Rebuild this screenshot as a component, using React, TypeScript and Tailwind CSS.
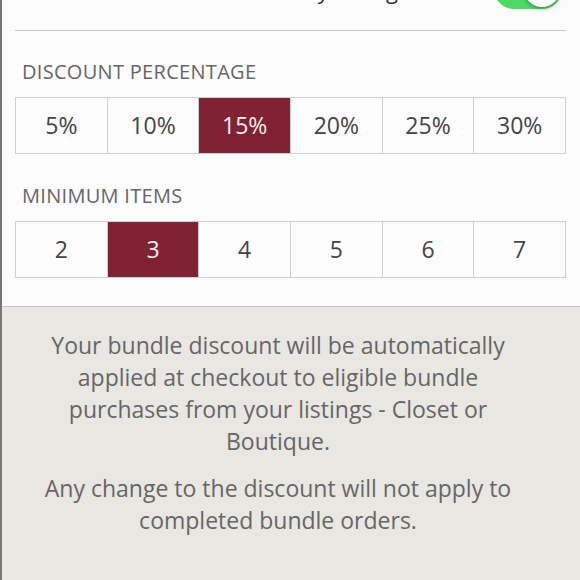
import React from "react";

const percents = ["5%", "10%", "15%", "20%", "25%", "30%"];
const items = ["2", "3", "4", "5", "6", "7"];

function Segmented({ values, selected }: { values: string[]; selected: string }) {
  return (
    <div className="ml-[13px] w-[551px] h-[57px] flex border border-[#cfcfcf]">
      {values.map((v, i) => (
        <div
          key={v}
          className={
            "flex-1 flex items-center justify-center text-[23px] " +
            (i < values.length - 1 ? "border-r border-[#cfcfcf] " : "") +
            (v === selected ? "bg-[#7f2232] text-[#f6eef0]" : "text-[#444444]")
          }
        >
          {v}
        </div>
      ))}
    </div>
  );
}

export default function App() {
  return (
    <div
      className="w-[580px] h-[580px] overflow-hidden flex flex-col border-l-2 border-[#767676]"
      style={{ fontFamily: "'Open Sans', Lato, sans-serif" }}
    >
      <div className="bg-[#fdfcfd] flex flex-col pb-[28px] border-b border-[#c4c4c4]">
        <div className="h-[60px] -mt-[40px] flex items-center justify-between pl-[8px] pr-[18px]">
          <span className="text-[22px] tracking-[0.4px] text-[#333333]">Offer Bundle Discounts on my listings</span>
          <div className="w-[68px] h-[40px] rounded-full bg-[#4cd964] relative -mt-[3px]">
            <div className="absolute right-[2px] top-[2px] w-[36px] h-[36px] rounded-full bg-white shadow-[0_2px_4px_rgba(0,0,0,0.3)]" />
          </div>
        </div>
        <div className="ml-[13px] w-[551px] mt-[10px] border-t border-[#c8c8c8]" />
        <div className="mt-[29px] pl-[20px] h-[24px] leading-[24px] text-[20px] tracking-[0.3px] text-[#666666]">
          DISCOUNT PERCENTAGE
        </div>
        <div className="mt-[13px]">
          <Segmented values={percents} selected="15%" />
        </div>
        <div className="mt-[30px] pl-[20px] h-[24px] leading-[24px] text-[20px] tracking-[0.3px] text-[#666666]">
          MINIMUM ITEMS
        </div>
        <div className="mt-[13px]">
          <Segmented values={items} selected="3" />
        </div>
      </div>
      <div className="flex-1 bg-[#e9e7e2] pt-[22px]">
        <div className="ml-[26px] w-[500px] text-center text-[23px] leading-[32px] text-[#666666]">
          <p>
            Your bundle discount will be automatically
            <br />
            applied at checkout to eligible bundle
            <br />
            purchases from your listings - Closet or
            <br />
            Boutique.
          </p>
          <p className="mt-[15px]">
            Any change to the discount will not apply to
            <br />
            completed bundle orders.
          </p>
        </div>
      </div>
    </div>
  );
}
